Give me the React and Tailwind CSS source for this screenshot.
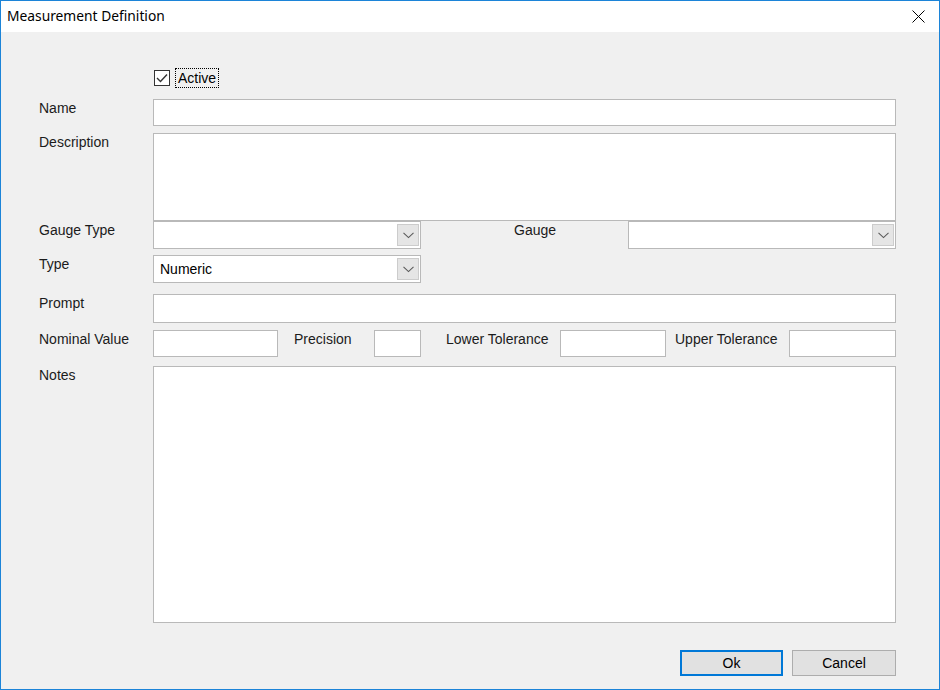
import { useState } from "react";

const labelCls = "text-[14px] leading-4 text-[#1b1b1b] pt-px";
const boxCls = "bg-white border border-[#b9b9b9]";

const Field = ({ className = "" }) => <div className={`${boxCls} ${className}`} />;

const Combo = ({ value = "", className = "" }) => (
  <div className={`${boxCls} h-[28px] flex items-center justify-between pl-[6px] pr-[1px] ${className}`}>
    <span className="text-[14px] text-black">{value}</span>
    <div className="w-[22px] h-[22px] bg-[#e5e5e5] border border-[#cccccc] flex items-center justify-center">
      <svg width="11" height="7" viewBox="0 0 11 7">
        <path d="M0.5 0.8 L5.5 5.6 L10.5 0.8" fill="none" stroke="#5a5a5a" strokeWidth="1.1" />
      </svg>
    </div>
  </div>
);

const Row = ({ label, children, className = "" }) => (
  <div className={`flex items-start ${className}`}>
    <div className={`${labelCls} w-[114px] shrink-0`}>{label}</div>
    {children}
  </div>
);

export default function App() {
  const [active, setActive] = useState(true);

  return (
    <div
      className="w-[940px] h-[690px] border border-[#1c84d8] flex flex-col bg-[#f0f0f0]"
      style={{ fontFamily: '"Liberation Sans", Arial, sans-serif' }}
    >
      {/* title bar */}
      <div className="h-[31px] bg-white flex items-center justify-between shrink-0">
        <span
          className="pl-[6px] text-[13.8px] text-black"
          style={{ fontFamily: '"Noto Sans", sans-serif' }}
        >
          Measurement Definition
        </span>
        <svg width="13" height="13" viewBox="0 0 13 13" className="mr-[14px]">
          <path d="M0.5 0.5 L12.5 12.5 M12.5 0.5 L0.5 12.5" stroke="#000" strokeWidth="1" />
        </svg>
      </div>

      <div className="flex flex-col pl-[38px] pt-[36px]">
        {/* active */}
        <div className="flex items-center h-[20px] ml-[115px]">
          <button
            onClick={() => setActive(!active)}
            className="w-[16px] h-[16px] border border-[#333333] bg-white flex items-center justify-center"
          >
            {active && (
              <svg width="12" height="10" viewBox="0 0 12 10">
                <path d="M1 5 L4.5 8.5 L11 1.5" fill="none" stroke="#333" strokeWidth="1.4" />
              </svg>
            )}
          </button>
          <span className="ml-[5px] px-[2px] border border-dotted border-black text-[14px] leading-[18px] text-black">
            Active
          </span>
        </div>

        <Row label="Name" className="mt-[11px]">
          <Field className="w-[743px] h-[27px]" />
        </Row>

        <Row label="Description" className="mt-[7px]">
          <Field className="w-[743px] h-[88px]" />
        </Row>

        <Row label="Gauge Type">
          <Combo className="w-[268px]" />
          <div className={`${labelCls} ml-[93px] w-[114px]`}>Gauge</div>
          <Combo className="w-[268px]" />
        </Row>

        <Row label="Type" className="mt-[6px]">
          <Combo value="Numeric" className="w-[268px]" />
        </Row>

        <Row label="Prompt" className="mt-[11px]">
          <Field className="w-[743px] h-[29px]" />
        </Row>

        <Row label="Nominal Value" className="mt-[7px]">
          <Field className="w-[125px] h-[27px]" />
          <div className={`${labelCls} ml-[16px] w-[80px]`}>Precision</div>
          <Field className="w-[47px] h-[27px]" />
          <div className={`${labelCls} ml-[25px] w-[114px]`}>Lower Tolerance</div>
          <Field className="w-[106px] h-[27px]" />
          <div className={`${labelCls} ml-[9px] w-[114px]`}>Upper Tolerance</div>
          <Field className="w-[107px] h-[27px]" />
        </Row>

        <Row label="Notes" className="mt-[9px]">
          <Field className="w-[743px] h-[257px]" />
        </Row>

        {/* buttons */}
        <div className="flex justify-end gap-[9px] mt-[27px] w-[857px]">
          <button className="w-[103px] h-[26px] bg-[#e1e1e1] border-2 border-[#0078d7] text-[14px] text-black">
            Ok
          </button>
          <button className="w-[104px] h-[26px] bg-[#e1e1e1] border border-[#adadad] text-[14px] text-black">
            Cancel
          </button>
        </div>
      </div>
    </div>
  );
}
